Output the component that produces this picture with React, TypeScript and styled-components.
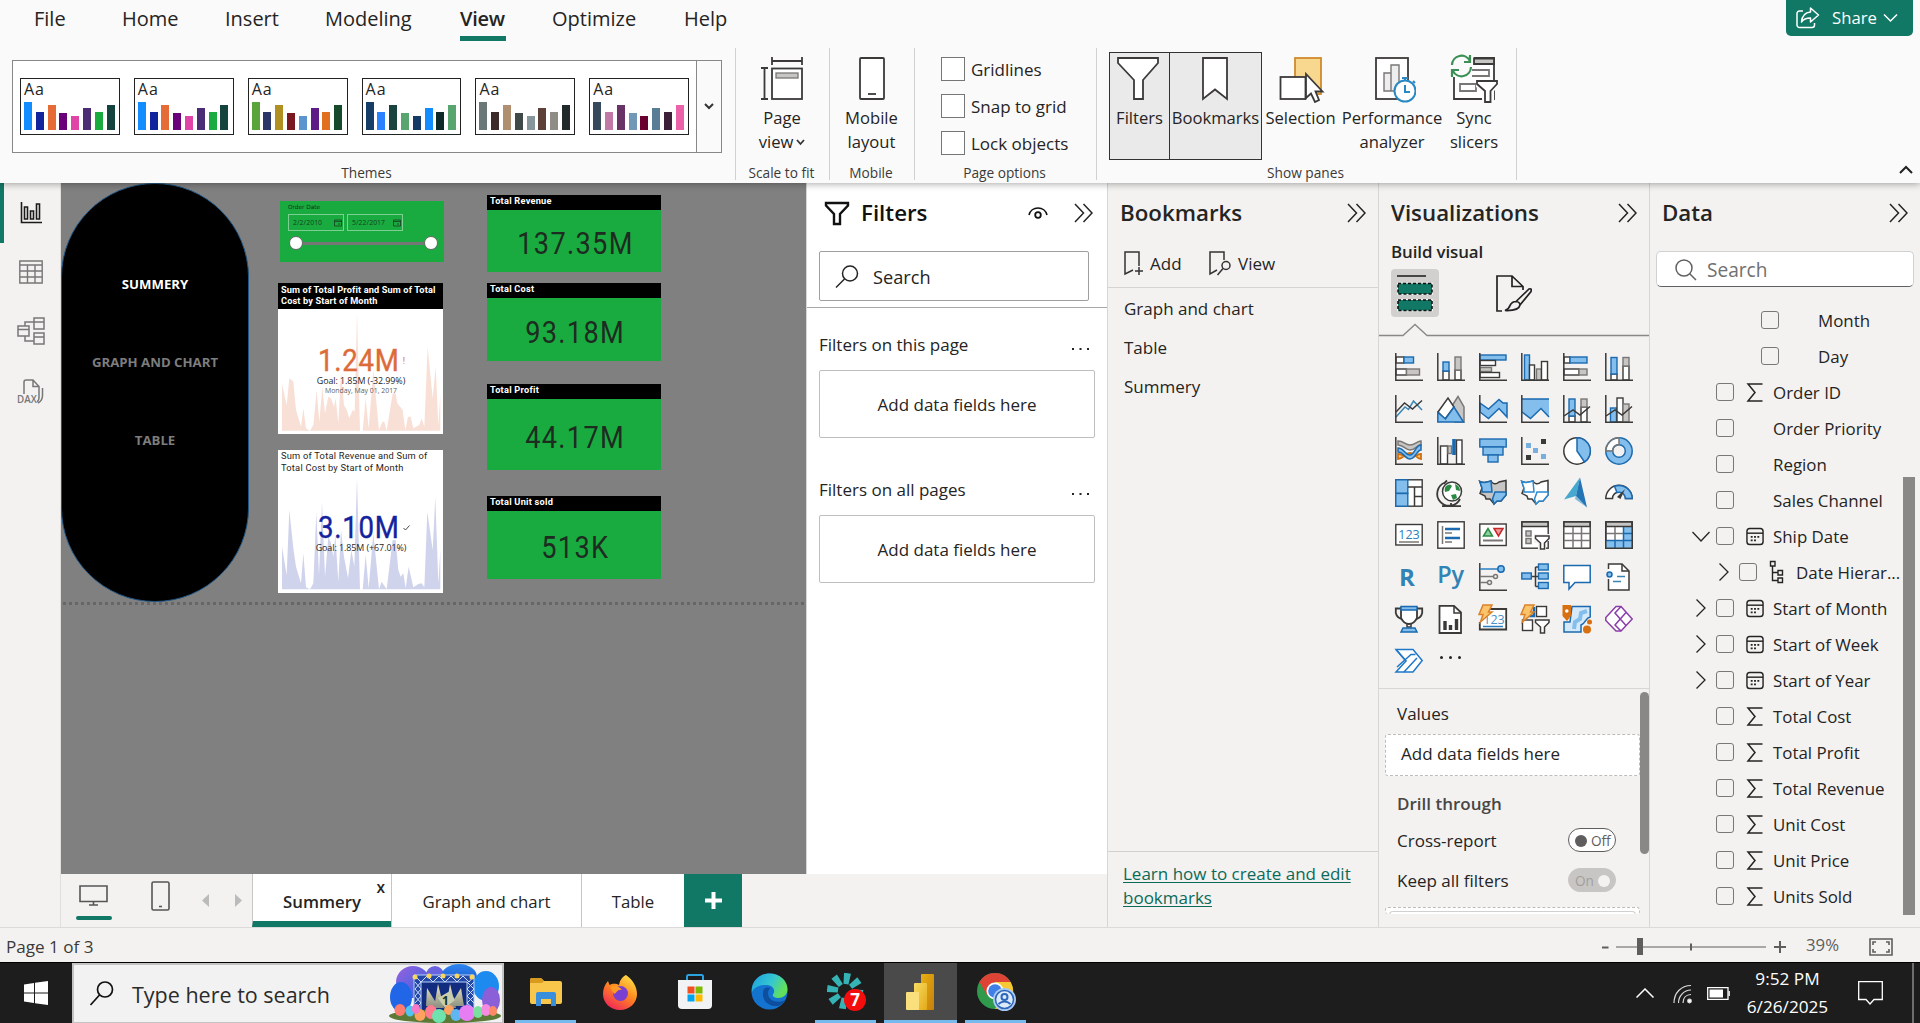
import React from "react";
import styled, { createGlobalStyle } from "styled-components";

const Global = createGlobalStyle`
  * { box-sizing: border-box; }
  html, body { margin: 0; padding: 0; overflow: hidden; }
  body { font-family: "Open Sans", "Noto Sans", sans-serif; color: #252423; }
  svg { display: block; flex: none; }
`;

const GREEN = "#117865";
const INK = "#3b3a39";
const BLUE = "#83beec";
const BLUE_D = "#1b6ab0";
const GRAY = "#c8c6c4";
const GRAY_D = "#797775";

const Window = styled.div`
  width: 1920px;
  height: 1023px;
  display: flex;
  flex-direction: column;
  background: #f3f2f1;
  overflow: hidden;
`;

/* ---------- ribbon ---------- */
const Ribbon = styled.header`
  height: 183px;
  flex: none;
  background: #fafafa;
  box-shadow: 0 1px 7px rgba(0, 0, 0, 0.35);
  position: relative;
  z-index: 2;
  display: flex;
  flex-direction: column;
`;
const MenuRow = styled.nav`
  height: 48px;
  display: flex;
  align-items: flex-start;
  padding-left: 34px;
`;
const MenuItem = styled.div<{ $w: number; $active?: boolean }>`
  width: ${(p) => p.$w}px;
  font-size: 20px;
  line-height: 37px;
  height: 37px;
  white-space: nowrap;
  font-weight: ${(p) => (p.$active ? 600 : 400)};
  letter-spacing: ${(p) => (p.$active ? "-0.3px" : "0")};
`;
const MenuMark = styled.div`
  width: 46px;
  height: 5px;
  margin-top: -1px;
  background: ${GREEN};
`;
const ShareButton = styled.button`
  margin-left: auto;
  margin-right: 7px;
  width: 127px;
  height: 36px;
  border: 0;
  border-radius: 0 0 5px 5px;
  background: ${GREEN};
  color: #fff;
  font: 400 16.7px/36px "Open Sans", sans-serif;
  display: flex;
  align-items: center;
  gap: 12px;
  padding: 0 0 0 9px;
`;
const Groups = styled.div`
  flex: 1;
  display: flex;
`;
const Group = styled.section<{ $w: number }>`
  width: ${(p) => p.$w}px;
  height: 132px;
  border-right: 1px solid #d2d0ce;
  display: flex;
  flex-direction: column;
`;
const GroupBody = styled.div<{ $pad?: string }>`
  height: 112px;
  flex: none;
  padding: ${(p) => p.$pad || "0"};
  display: flex;
  justify-content: flex-start;
`;
const GroupLabel = styled.div`
  font-size: 13.7px;
  line-height: 20px;
  height: 20px;
  flex: none;
  text-align: center;
  color: #3b3a39;
  padding-right: 2px;
  margin-top: 3px;
`;
const Gallery = styled.div`
  width: 710px;
  height: 93px;
  border: 1px solid #8a8886;
  background: #fff;
  display: flex;
  align-items: center;
  padding-left: 7px;
  gap: 14px;
`;
const GalleryMore = styled.div`
  width: 25px;
  height: 91px;
  margin-left: -7px;
  border-left: 1px solid #8a8886;
  background: #fafafa;
  display: grid;
  place-items: center;
`;
const Theme = styled.div`
  width: 100px;
  height: 57px;
  border: 1.5px solid #222;
  background: #fff;
  padding: 1px 4px 4px 3px;
  display: flex;
  flex-direction: column;
  justify-content: space-between;
`;
const ThemeName = styled.div`
  font-size: 16px;
  line-height: 18px;
  letter-spacing: 1px;
`;
const Bars = styled.div`
  display: flex;
  align-items: flex-end;
  gap: 3.8px;
  height: 29px;
`;
const Bar = styled.i<{ $c: string; $h: number }>`
  width: 8px;
  height: ${(p) => p.$h}px;
  background: ${(p) => p.$c};
`;
const BigButton = styled.div<{ $w: number; $on?: boolean; $ml?: number }>`
  width: ${(p) => p.$w}px;
  height: 108px;
  margin-left: ${(p) => p.$ml || 0}px;
  border: 1px solid ${(p) => (p.$on ? "#333" : "transparent")};
  background: ${(p) => (p.$on ? "#eaeaea" : "transparent")};
  display: flex;
  flex-direction: column;
  align-items: center;
  font-size: 16.6px;
  line-height: 24px;
  text-align: center;
  white-space: nowrap;
`;
const BigIcon = styled.div<{ $pl?: number; $pr?: number }>`
  height: 53px;
  padding-left: ${(p) => p.$pl || 0}px;
  padding-right: ${(p) => p.$pr || 0}px;
  display: flex;
  align-items: flex-start;
`;
const Line = styled.div`
  display: flex;
  align-items: center;
  justify-content: center;
  gap: 3px;
`;
const Checks = styled.div`
  display: flex;
  flex-direction: column;
  gap: 13px;
`;
const Check = styled.label`
  height: 24px;
  display: flex;
  align-items: center;
  gap: 6px;
  font-size: 17px;
`;
const Box = styled.span`
  width: 24px;
  height: 24px;
  border: 1px solid #767676;
  background: #fff;
`;
const Collapse = styled.div`
  margin-left: auto;
  padding: 117px 7px 0 0;
`;

/* ---------- main ---------- */
const Main = styled.main`
  height: 745px;
  flex: none;
  display: flex;
  border-bottom: 1px solid #dcdad8;
`;
const Rail = styled.aside`
  width: 61px;
  border-right: 1px solid #e1dfdd;
  display: flex;
  flex-direction: column;
`;
const RailItem = styled.div<{ $on?: boolean; $h: number }>`
  height: ${(p) => p.$h}px;
  border-left: 4px solid ${(p) => (p.$on ? GREEN : "transparent")};
  padding-right: 3px;
  display: grid;
  place-items: center;
`;
const Work = styled.div`
  width: 1046px;
  display: flex;
  flex-direction: column;
`;
const WorkTop = styled.div`
  height: 691px;
  display: flex;
`;
const Canvas = styled.div`
  width: 745px;
  background: #808080;
  position: relative;
`;
const Visual = styled.div<{ $x: number; $y: number; $w: number; $h: number; $bg?: string }>`
  position: absolute;
  left: ${(p) => p.$x - 61}px;
  top: ${(p) => p.$y - 183}px;
  width: ${(p) => p.$w}px;
  height: ${(p) => p.$h}px;
  background: ${(p) => p.$bg || "transparent"};
`;
const Pill = styled(Visual)`
  border-radius: 94px;
  border: 1px solid #1f5687;
  background: #000;
  display: flex;
  flex-direction: column;
  align-items: center;
  padding-top: 90px;
`;
const PillItem = styled.div<{ $on?: boolean }>`
  height: 78px;
  line-height: 20px;
  font-size: 13.2px;
  font-weight: 700;
  color: ${(p) => (p.$on ? "#fff" : "#7d7d7d")};
`;
const PageEdge = styled(Visual)`
  background: repeating-linear-gradient(90deg, #666 0 3px, #808080 3px 6px);
`;
const Slicer = styled(Visual)`
  background: #1aab40;
  padding: 2px 8px;
`;
const SlicerTitle = styled.div`
  font: 400 5.8px/9px "DejaVu Sans", sans-serif;
  color: #17301c;
`;
const DateRow = styled.div`
  display: flex;
  gap: 3px;
  margin-top: 2px;
`;
const DateBox = styled.div`
  width: 56px;
  height: 17px;
  border: 1px solid #7ccf90;
  display: flex;
  align-items: center;
  justify-content: space-between;
  padding: 0 1px 0 4px;
  font-size: 6.8px;
  letter-spacing: 0.1px;
  line-height: 14px;
  color: #14401f;
`;
const Track = styled.div`
  margin: 5px -2px 0 1px;
  height: 14px;
  display: flex;
  align-items: center;
`;
const Knob = styled.i`
  width: 14px;
  height: 14px;
  border-radius: 50%;
  background: #fff;
  border: 1px solid #666;
`;
const Rule = styled.i`
  flex: 1;
  height: 3px;
  background: #767676;
`;
const CardHead = styled.div<{ $h: number }>`
  height: ${(p) => p.$h}px;
  background: #000;
  color: #fff;
  font: 700 9.2px/12px Roboto, sans-serif;
  letter-spacing: 0.25px;
  padding-left: 3px;
`;
const CardValue = styled.div<{ $h: number; $pad?: number }>`
  height: ${(p) => p.$h}px;
  padding: ${(p) => p.$pad || 0}px 0 0 2px;
  display: flex;
  align-items: center;
  justify-content: center;
  font: 400 30.5px/30px Roboto, sans-serif;
  letter-spacing: 1.5px;
  color: #1d2b20;
`;
/* Roboto drawn at the narrower proportions of a DIN numeral */
const Narrow = styled.span<{ $s: number }>`
  display: inline-block;
  transform: scaleX(${(p) => p.$s});
`;
const KpiHead = styled.div<{ $dark?: boolean }>`
  height: 26px;
  padding: ${(p) => (p.$dark ? "1px" : "0")} 0 0 3px;
  background: ${(p) => (p.$dark ? "#000" : "#fff")};
  color: ${(p) => (p.$dark ? "#fff" : "#252423")};
  font: ${(p) => (p.$dark ? "700 9.2px/11px" : "400 9.3px/12px")} Roboto, sans-serif;
  letter-spacing: ${(p) => (p.$dark ? "0.14px" : "0.22px")};
  white-space: nowrap;
`;
const KpiBody = styled.div<{ $h: number }>`
  height: ${(p) => p.$h}px;
  display: grid;
  > * { grid-area: 1 / 1; }
`;
const KpiText = styled.div<{ $pad: number }>`
  padding-top: ${(p) => p.$pad}px;
  display: flex;
  flex-direction: column;
  align-items: center;
  z-index: 1;
`;
const KpiValue = styled.div<{ $c: string }>`
  display: flex;
  align-items: center;
  font: 400 31px/28px Roboto, sans-serif;
  letter-spacing: 0.8px;
  color: ${(p) => p.$c};
  -webkit-text-stroke: 0.4px ${(p) => p.$c};
  padding-right: 6px;
`;
const KpiMark = styled.span`
  width: 0;
  margin-left: -3px;
  font-size: 9px;
  padding-left: 1px;
  -webkit-text-stroke: 0;
`;
const KpiGoal = styled.div`
  font-size: 8.9px;
  line-height: 11px;
  letter-spacing: -0.05px;
`;
const KpiDate = styled.div`
  font-size: 6.9px;
  line-height: 9px;
  color: #605e5c;
`;

/* ---------- panes ---------- */
const Pane = styled.section<{ $w: number; $bg?: string }>`
  width: ${(p) => p.$w}px;
  background: ${(p) => p.$bg || "#f3f2f1"};
  border-left: 1px solid #d8d6d4;
  display: flex;
  flex-direction: column;
  font-size: 17px;
`;
const PaneHead = styled.div<{ $l: number; $r: number }>`
  height: 58px;
  flex: none;
  padding: 1px ${(p) => p.$r}px 0 ${(p) => p.$l}px;
  display: flex;
  align-items: center;
`;
const PaneTitle = styled.h2`
  margin: 0 auto 0 0;
  font-size: 22.3px;
  line-height: 30px;
  font-weight: 600;
`;
const FilterTitle = styled(PaneTitle)`
  padding-left: 11px;
  color: #111;
`;
const HeadGap = styled.span`
  width: 26px;
`;
const SearchBox = styled.div`
  margin: 10px 0 0 12px;
  width: 270px;
  height: 50px;
  flex: none;
  border: 1px solid #a19f9d;
  border-radius: 2px;
  display: flex;
  align-items: center;
  gap: 14px;
  padding-left: 15px;
  font-size: 18.2px;
  padding-top: 1px;
`;
const FilterBody = styled.div`
  margin-top: 6px;
  border-top: 1px solid #a8a8a8;
  padding: 23px 12px 0 12px;
`;
const FilterHead = styled.div`
  height: 39px;
  line-height: 27px;
  display: flex;
  justify-content: space-between;
  padding-right: 6px;
`;
const DropZone = styled.div`
  width: 276px;
  height: 68px;
  border: 1px solid #c1bfbd;
  border-radius: 2px;
  display: grid;
  place-items: center;
  margin-bottom: 38px;
`;
const BmTools = styled.div`
  height: 47px;
  border-bottom: 1px solid #d6d4d2;
  display: flex;
  align-items: center;
  padding: 0 0 1px 16px;
`;
const BmTool = styled.div<{ $w: number }>`
  width: ${(p) => p.$w}px;
  display: flex;
  align-items: center;
  gap: 7px;
  height: 45px;
  line-height: 45px;
`;
const BmList = styled.div`
  padding-top: 1px;
`;
const BmItem = styled.div`
  height: 39px;
  line-height: 39px;
  padding-left: 16px;
`;
const BmFoot = styled.div`
  margin-top: auto;
  height: 76px;
  border-top: 1px solid #d2d0ce;
  padding: 10px 0 0 15px;
  line-height: 24px;
  color: #0b6a58;
  text-decoration: underline;
  text-underline-offset: 2px;
  text-decoration-thickness: 1px;
`;
const SubTitle = styled.div`
  padding-left: 12px;
  font-size: 16.9px;
  font-weight: 600;
  line-height: 22px;
  height: 28px;
  letter-spacing: -0.1px;
`;
const Modes = styled.div`
  display: flex;
  padding-left: 12px;
  gap: 51px;
  height: 54px;
`;
const Mode = styled.div<{ $on?: boolean }>`
  width: 48px;
  height: 48px;
  border-radius: 4px;
  background: ${(p) => (p.$on ? "#d2d0ce" : "transparent")};
  display: grid;
  place-items: center;
`;
const IconGrid = styled.div`
  display: grid;
  grid-template-columns: repeat(6, 28px);
  grid-auto-rows: 28px;
  gap: 14px;
  padding: 16px 0 0 16px;
  height: 352px;
  flex: none;
  border-bottom: 1px solid #d8d6d4;
`;
const VizScroll = styled.div`
  display: flex;
  height: 225px;
`;
const Wells = styled.div`
  width: 261px;
  height: 225px;
  overflow: hidden;
  padding-left: 6px;
  display: flex;
  flex-direction: column;
`;
const WellLabel = styled.div<{ $h: number; $bold?: boolean; $pt?: number }>`
  height: ${(p) => p.$h}px;
  flex: none;
  display: flex;
  align-items: center;
  justify-content: space-between;
  padding: ${(p) => p.$pt || 0}px 24px 0 12px;
  font-weight: ${(p) => (p.$bold ? 600 : 400)};
  color: ${(p) => (p.$bold ? "#484644" : "#252423")};
`;
const Well = styled.div`
  height: 42px;
  flex: none;
  border: 1px dashed #bebbb8;
  padding-left: 15px;
  border-radius: 3px;
  background: #fff;
  line-height: 37px;
`;
const CutWell = styled(Well)`
  height: 7px;
  margin-top: 3px;
  padding: 3px;
  border-bottom: 0;
`;
const WellInner = styled.div`
  height: 4px;
  border: 1px solid #d2d0ce;
  border-bottom: 0;
  border-radius: 4px 4px 0 0;
`;
const Toggle = styled.div<{ $off?: boolean }>`
  width: 48px;
  height: 24px;
  border-radius: 12px;
  border: 1px solid ${(p) => (p.$off ? "#605e5c" : "#c8c6c4")};
  background: ${(p) => (p.$off ? "#fff" : "#c8c6c4")};
  color: ${(p) => (p.$off ? "#605e5c" : "#a19f9d")};
  font-size: 13.6px;
  line-height: 20px;
  padding-top: 1px;
  display: flex;
  align-items: center;
  gap: 4px;
  padding-left: 6px;
`;
const Dot = styled.i<{ $c: string }>`
  width: 12px;
  height: 12px;
  border-radius: 50%;
  background: ${(p) => p.$c};
`;
const VizThumb = styled.div`
  width: 9px;
  height: 162px;
  margin-top: 3px;
  border-radius: 5px;
  background: #8a8886;
`;
const DataSearch = styled.div`
  margin: 10px 0 0 6px;
  width: 258px;
  height: 36px;
  flex: none;
  border: 1px solid #d1d1d1;
  border-bottom-color: #616161;
  border-radius: 5px;
  background: #fff;
  color: #707070;
  font-size: 19.1px;
  display: flex;
  align-items: center;
  gap: 10px;
  padding: 1px 0 0 18px;
`;
const DataBody = styled.div`
  display: flex;
  margin-top: 15px;
`;
const Fields = styled.div`
  width: 253px;
`;
const Field = styled.div<{ $indent: number }>`
  height: 36px;
  padding-left: ${(p) => p.$indent}px;
  display: flex;
  align-items: center;
  white-space: nowrap;
`;
const Slot = styled.span<{ $w: number; $pl?: number }>`
  width: ${(p) => p.$w}px;
  padding-left: ${(p) => p.$pl || 0}px;
  flex: none;
  display: flex;
`;
const FieldBox = styled.span`
  width: 18px;
  height: 18px;
  margin-right: 12px;
  flex: none;
  border: 1px solid #7a7876;
  border-radius: 3px;
`;
const FieldName = styled.span`
  font-size: 16.9px;
`;
const DataThumb = styled.div`
  width: 12px;
  height: 438px;
  margin-top: 175px;
  background: #8a8886;
`;

/* ---------- page tabs + status ---------- */
const Tabs = styled.div`
  height: 53px;
  display: flex;
  font-size: 16.8px;
`;
const Views = styled.div`
  width: 191px;
  display: flex;
  padding-left: 15px;
`;
const View = styled.div<{ $w: number; $pt: number }>`
  width: ${(p) => p.$w}px;
  padding-top: ${(p) => p.$pt}px;
`;
const Underline = styled.i`
  display: block;
  width: 36px;
  height: 4px;
  margin-top: 10px;
  border-radius: 2px;
  background: ${GREEN};
`;
const Tab = styled.div<{ $w: number; $on?: boolean }>`
  width: ${(p) => p.$w}px;
  background: #fff;
  border-left: 1px solid #c8c6c4;
  border-bottom: ${(p) => (p.$on ? `6px solid ${GREEN}` : "0")};
  font-weight: ${(p) => (p.$on ? 600 : 400)};
  height: 53px;
  line-height: 55px;
  text-align: center;
  position: relative;
`;
const TabClose = styled.span`
  position: absolute;
  right: 6px;
  top: 0;
  font-size: 15.5px;
  line-height: 26px;
`;
const AddTab = styled.div`
  width: 58px;
  background: ${GREEN};
  display: grid;
  place-items: center;
`;
const Status = styled.footer`
  height: 34px;
  flex: none;
  display: flex;
  align-items: center;
  padding: 3px 27px 0 6px;
  font-size: 17.1px;
  color: #3b3a39;
`;
const Zoom = styled.div`
  margin-left: auto;
  display: flex;
  align-items: center;
  color: #605e5c;
`;
const Percent = styled.span`
  width: 63px;
  margin-left: 20px;
  margin-top: -4px;
  font-size: 16.8px;
`;

/* ---------- taskbar ---------- */
const Taskbar = styled.div`
  height: 61px;
  flex: none;
  background: #1d1d1d;
  border-top: 1px solid #000;
  display: flex;
`;
const Start = styled.div`
  width: 72px;
  display: grid;
  place-items: center;
`;
const TaskSearch = styled.div`
  width: 432px;
  height: 60px;
  background: #f2f2f2;
  border: 2px solid #c3c3c3;
  border-bottom-width: 1px;
  display: flex;
  align-items: center;
  padding-left: 15px;
  font-size: 21.5px;
  color: #2b2b2b;
`;
const TaskText = styled.span`
  margin-left: 18px;
  width: 256px;
  padding-top: 1px;
`;
const TaskItem = styled.div<{ $w: number; $ml?: number; $run?: boolean; $on?: boolean; $pl?: number }>`
  width: ${(p) => p.$w}px;
  margin-left: ${(p) => p.$ml || 0}px;
  padding-left: ${(p) => p.$pl || 0}px;
  height: 60px;
  background: ${(p) => (p.$on ? "#4a4a4a" : "transparent")};
  border-bottom: 3px solid ${(p) => (p.$run ? "#76b9ed" : "transparent")};
  display: grid;
  place-items: center;
`;
const Tray = styled.div`
  margin-left: auto;
  display: flex;
  align-items: center;
  color: #fff;
`;
const Wifi = styled.span`
  margin: 2px 15px 0 19px;
`;
const Clock = styled.div`
  width: 128px;
  padding-right: 13px;
  text-align: center;
  font-size: 17.2px;
  line-height: 28px;
`;
const Peek = styled.i`
  width: 2px;
  height: 60px;
  margin: 0 6px 0 29px;
  background: #6e6e6e;
`;

/* ---------- icons ---------- */
type RP = { x: number; y: number; w: number; h: number; k?: "b" | "g" | "w" | "k" };
const fills = { b: [BLUE, BLUE_D], g: [GRAY, GRAY_D], w: ["#fff", INK], k: [INK, INK] };
const R = ({ x, y, w, h, k = "w" }: RP) => (
  <rect x={x} y={y} width={w} height={h} fill={fills[k][0]} stroke={fills[k][1]} strokeWidth={1.4} />
);
const V = ({ children }: { children: React.ReactNode }) => (
  <svg width="28" height="28" viewBox="0 0 28 28" fill="none" stroke={INK} strokeWidth={1.5} overflow="visible">
    {children}
  </svg>
);
const Axis = () => <path d="M.8 0V27.2H28" />;

const bolt = "M4 0H13L9.500 7H13L1.500 17L4 9.500H0Z";
const ohio = "M.8 2.500C4 4 8 3.500 12 2 13 5 17 6 20 3L27 1.500V16L22 22H18L15 25 11 20H7L6 17 1 14.500 3 9Z";
const ohioNW = "M.8 2.500C4 4 8 3.500 12 2L13 13H3L3 9Z";
const ohioSE = "M16 13H27V16L22 22H18L15 25 13.500 20Z";

const vizIcons: React.ReactNode[] = [
  <V><R x={1} y={4} w={8} h={6} /><R x={9} y={4} w={9.500} h={6} k="b" /><R x={1} y={16} w={10.500} h={6} /><R x={11.500} y={16} w={13} h={6} k="g" /><Axis /></V>,
  <V><R x={6} y={18} w={6} h={9} /><R x={6} y={9} w={6} h={9} k="b" /><R x={18} y={17} w={6} h={10} /><R x={18} y={4} w={6} h={13} k="g" /><Axis /></V>,
  <V><R x={1} y={2} w={26} h={5} k="b" /><R x={1} y={7.500} w={15.500} h={5} /><R x={1} y={14.500} w={11.500} h={4} k="g" /><R x={1} y={19.500} w={19.500} h={5} /><Axis /></V>,
  <V><R x={3.500} y={2} w={5} h={25} k="b" /><R x={8.500} y={12} w={5} h={15} /><R x={15.500} y={16} w={5} h={11} k="g" /><R x={20.500} y={8.500} w={6} h={18.500} /><Axis /></V>,
  <V><R x={1} y={4} w={6} h={6} /><R x={7} y={4} w={17} h={6} k="b" /><R x={1} y={16} w={15} h={6} /><R x={16} y={16} w={8} h={6} k="g" /><Axis /></V>,
  <V><R x={6} y={21} w={6} h={6} /><R x={6} y={4.500} w={6} h={16.500} k="b" /><R x={18} y={13} w={6} h={14} /><R x={18} y={4.500} w={6} h={8.500} k="g" /><Axis /></V>,

  <V><path d="M1 22L10 12 13.500 14.500 18.500 6 27 15" stroke="#3a85b5" /><path d="M1 17L9.500 8 17.500 14 27 5.500" /><Axis /></V>,
  <V><path d="M13 14L21 1.500 27 12V27H18Z" fill={GRAY} stroke={GRAY_D} /><path d="M1 17L11 3 17 12 8 24Z" fill="#fff" /><path d="M.8 27V17.500L8.500 24 17 12 26.500 27Z" fill={BLUE} stroke={BLUE_D} /></V>,
  <V><path d="M1 8L9.500 14 20 4.500 24 8H28V22L20 13.500 9.500 23.500 1 17Z" fill={BLUE} stroke={BLUE_D} /><Axis /></V>,
  <V><path d="M1 4H28V22L20 13.500 9.500 23.500 1 17Z" fill={BLUE} stroke="none" /><path d="M1 4H28M1 17L9.500 23.500 20 13.500 28 22" stroke={BLUE_D} /><Axis /></V>,
  <V><R x={6} y={21} w={6} h={6} /><R x={6} y={4} w={6} h={17} k="b" /><R x={18} y={12} w={6} h={15} /><R x={18} y={4} w={6} h={8} k="g" /><path d="M1 21L10 15 17 20 27 11.500" /><Axis /></V>,
  <V><R x={5.500} y={13} w={6} h={14} k="b" /><R x={12} y={3} w={6} h={24} /><R x={18} y={9} w={6} h={18} k="g" /><path d="M1 21L10 15 17 20 27 11.500" /><Axis /></V>,

  <V><path d="M3 4C9 4 10 8 15 8S22 4 26 4V8C22 8 20 13 15 13S9 8 3 8Z" fill={GRAY} stroke={GRAY_D} /><path d="M3 22C8 22 10 16 15 16S22 22 26 22V17C21 17 20 21 15 21S9 17 3 17Z" fill="#f8c77a" stroke="#d0700f" strokeWidth={1.8} /><path d="M3 11C9 11 10 18 15 18S20 8 26 8V13C22 13 20 22 15 22S9 15 3 15Z" fill={BLUE} stroke={BLUE_D} /><Axis /></V>,
  <V><R x={3.500} y={9} w={7} h={18} /><R x={11} y={9} w={3.500} h={7.500} k="g" /><path d="M17 2V18" stroke={BLUE_D} strokeWidth={3.600} /><R x={19.500} y={3} w={5.500} h={24} /><Axis /></V>,
  <V><R x={.8} y={2} w={26.400} h={8} k="b" /><R x={4} y={10} w={20} h={8} k="b" /><R x={9} y={18} w={10} h={7} k="b" /></V>,
  <V><Axis /><g stroke="none"><path d="M20 2h5v5h-5zM5 18h5v5H5z" fill={INK} /><path d="M5 6h5v5H5zM12 11h5v5h-5zM20 17h5v5h-5z" fill="#76aede" /></g></V>,
  <V><circle cx="14" cy="14" r="13.200" fill="#fff" /><path d="M14 .8A13.200 13.200 0 0 1 21.500 25L14 14Z" fill={BLUE} stroke={BLUE_D} /></V>,
  <V><circle cx="14" cy="14" r="9.800" stroke={BLUE} strokeWidth={6.500} /><path d="M14 4.200A9.800 9.800 0 0 0 4.200 13" stroke="#fff" strokeWidth={6.500} /><g stroke={BLUE_D}><circle cx="14" cy="14" r="13.200" /><circle cx="14" cy="14" r="6.300" /></g><path d="M14 .8A13.200 13.200 0 0 0 .8 14H7.500A6.500 6.500 0 0 1 14 7.500Z" stroke={GRAY_D} /></V>,

  <V><R x={.8} y={.8} w={26.400} h={26.400} /><R x={.8} y={.8} w={12} h={13.500} k="b" /><R x={.8} y={14.500} w={12} h={12.700} k="b" /><path d="M13 8H27M19.500 8V27M19.500 17.500H27" /></V>,
  <V><path d="M8 3.500A12 12 0 1 0 23 20M10 1.500L7 4.500M14 24V27M5 27.200H24" strokeWidth={1.8} /><circle cx="15" cy="12.500" r="9.500" fill="#fff" /><path d="M9 7Q13 4 15 7L12 12 8 13Q7 9 9 7ZM18 5Q23 7 23 12L19 11ZM14 16L19 15 20 19 16 21Z" fill="#2a8a43" stroke="none" /></V>,
  <V><path d={ohio} fill={GRAY} /><path d={ohioNW} fill={BLUE} stroke={BLUE_D} /><path d={ohioSE} fill={BLUE} stroke={BLUE_D} /></V>,
  <V><path d={ohio} fill="#fff" /><path d={ohioNW} fill="#fff" stroke="#2a8ad4" /><path d={ohioSE} fill="#fff" stroke="#2a8ad4" /></V>,
  <V><g stroke="none"><path d="M17-1.500L1 20.500 13 17Z" fill="#47a8cf" /><path d="M17-1.500L24 28.500 13 17Z" fill="#2374b5" /><path d="M17-1.500L13 17 24 28.500 12 20Z" fill="#3796cb" opacity=".6" /></g></V>,
  <V><path d="M.8 19.500A13.200 13.200 0 0 1 27.200 19.500H20.500A6.500 6.500 0 0 0 7.500 19.500Z" fill="#fff" /><path d="M9.500 7.300A13.200 13.200 0 0 1 27.200 19.500H20.500A6.500 6.500 0 0 0 12 13.500Z" fill={BLUE} stroke={BLUE_D} /><path d="M20 10L12 18 15.500 20Z" fill={INK} stroke="none" /></V>,

  <V><R x={.8} y={3.500} w={26.400} h={20.500} /><text x="14" y="17.500" fontSize="12.500" fontFamily="Open Sans" textAnchor="middle" fill="#2a7fc0" stroke="none">123</text><path d="M4 21H24" stroke={GRAY_D} /></V>,
  <V><R x={.8} y={.8} w={26.400} h={26.400} /><path d="M5.500 5V23" stroke={GRAY_D} /><path d="M8 8H23M8 17H23" stroke={BLUE_D} strokeWidth={2.600} /><path d="M8 12H15M8 21H15" stroke={GRAY_D} /></V>,
  <V><R x={.8} y={3} w={26.400} h={21.500} /><path d="M4.500 15L9 7.500 13.500 15Z" fill="#8fd19e" stroke="#2e8b45" /><path d="M15 7.500H24L19.500 15Z" fill="#ef9a9a" stroke="#c62828" /><path d="M4 19.500H24" stroke={GRAY_D} strokeWidth={2} /></V>,
  <V><R x={.8} y={.8} w={26.400} h={26.400} /><path d="M1 1H27V5.500H1Z" fill={GRAY} /><path d="M5 10h5v5H5zM5 17.500h5v5H5z" fill={GRAY} stroke={GRAY_D} /><path d="M13 13H29V20H25V29H17V22H13Z" fill="#f3f2f1" stroke="none" /><path d="M14.500 15H28V17.500L23.500 22V28H19.500V22L14.500 17.500Z" fill="#fff" /></V>,
  <V><R x={.8} y={.8} w={26.400} h={26.400} /><path d="M1 1H27V5.500H1Z" fill={GRAY} /><path d="M10 6V27M18.500 6V27M1 12.500H27M1 19.500H27" stroke={GRAY_D} /></V>,
  <V><R x={.8} y={.8} w={26.400} h={26.400} /><path d="M18.500 6H27V27H1V19.500H18.500Z" fill={BLUE} stroke="none" /><path d="M1 1H27V5.500H1Z" fill={GRAY} /><path d="M10 6V19M1 12.500H18" stroke={GRAY_D} /><path d="M18.500 6V27M10 19.500V27M18.500 12.500H27M1 19.500H27" stroke={BLUE_D} /><path d="M.8.800V27.200H27.200V.8" stroke={INK} /></V>,

  <V><text x="12" y="23" fontSize="24" fontWeight="700" fontFamily="Open Sans" textAnchor="middle" fill="#3183b5" stroke="none">R</text></V>,
  <V><text x="13.700" y="20" fontSize="23.500" fontWeight="600" fontFamily="Open Sans" textAnchor="middle" fill="#3183b5" stroke="none">Py</text></V>,
  <V><Axis /><path d="M1 6H19" stroke="#2a7fc0" /><circle cx="22" cy="6" r="3.200" fill={BLUE} stroke={BLUE_D} /><g stroke={GRAY_D}><path d="M1 13.500H14M1 19.500H8" /><circle cx="16.500" cy="13.500" r="2" /><circle cx="10.500" cy="19.500" r="2" /></g></V>,
  <V><path d="M10 13.500H18M14.500 4V23.500M14.500 4H18M14.500 23.500H18" /><R x={.8} y={10} w={9.500} h={6} k="b" /><R x={17.500} y={1} w={9.700} h={6} k="b" /><R x={17.500} y={10} w={9.700} h={6} k="b" /><R x={17.500} y={19.500} w={9.700} h={6} k="b" /></V>,
  <V><path d="M.8 2.500H27.200V19.500H12L6 26V19.500H.8Z" fill="#fff" stroke={BLUE_D} /></V>,
  <V><path d="M3.500 6V1H17L24 8V27H3.500V16" fill="#fff" /><path d="M17 1V8H24" /><circle cx="4.500" cy="11.500" r="2.500" fill={BLUE} stroke={BLUE_D} /><path d="M12 13.500H20M8 18.500H16" stroke="#3a85b5" /></V>,

  <V><path d="M6 3.500H.8V8Q2 13 7 14M22 3.500H27.200V8Q26 13 21 14" strokeWidth={1.8} /><path d="M6 3H22V13Q19 19 14 19T6 13Z" fill="#fff" strokeWidth={1.800} /><path d="M12 19V22H16V19" /><path d="M6 1.500H22V5H6Z" fill={BLUE} stroke={BLUE_D} /><path d="M8 23H20L22 27H6Z" fill={BLUE} stroke={BLUE_D} /></V>,
  <V><path d="M2.500.800H17L24 7.500V28H2.500Z" fill="#fff" strokeWidth={1.800} /><path d="M17 1V8H24" /><path d="M8 16V25M13.500 20V25M19.500 14V25" strokeWidth={3.400} /></V>,
  <V><path d="M11 4H27.200V24.500H.8V17" fill="#fff" strokeWidth={1.800} /><text x="15" y="18.500" fontSize="12.500" fontFamily="Open Sans" textAnchor="middle" fill="#4a92c8" stroke="none">123</text><path d="M4 21.500H24" stroke="#2a7fc0" /><path d={bolt} fill="#fbc46b" stroke="#d9822b" /></V>,
  <V><R x={15.500} y={1.500} w={10} h={10} /><R x={1.500} y={15} w={10} h={10.500} /><path d="M8 11H13V2" stroke={BLUE_D} strokeWidth={2.500} /><path d="M14 14H29V20H25V29H17V22H13Z" fill="#f3f2f1" stroke="none" /><path d="M14.500 15H28V17.500L23.500 22V28H19.500V22L14.500 17.500Z" fill="#fff" /><path d={bolt} fill="#fbc46b" stroke="#d9822b" /></V>,
  <V><path d="M9 1.500H27.200V12C22 13 24 17 18 20V27H1V17H7Z" fill="#d6e9f8" stroke={BLUE_D} /><path d="M11 24L12 17 17 14 18 8 24 6" stroke={BLUE} strokeWidth={4} /><g fill="#d86f10" stroke="none"><path d="M-.500 0H8V11L4 16-.500 11Z" /><circle cx="24" cy="24.500" r="4" /><circle cx="26.500" cy="17" r="2.500" /></g><circle cx="3.800" cy="6" r="1.800" fill="#fff" stroke="none" /></V>,
  <V><g stroke="#8a3ea8"><path d="M11 1.500L.8 12.500V15.500L11 26H16L27.200 14 16 1.500Z" fill="#fff" /><path d="M16 1.500L10 8 21 20.500M21 7.500L10 20 16 26" /></g></V>,

  <V><path d="M1 2.500H18L27.200 13.500 18 25H1L11 14Z" fill="#fff" stroke="#1f78c8" /><path d="M1 2.500L11 14M2 20L16 7.500H20.500M9 25L22 11" stroke="#1f78c8" /></V>,
  <V><g fill="#252423" stroke="none"><circle cx="4.500" cy="10.500" r="1.500" /><circle cx="13.500" cy="10.500" r="1.500" /><circle cx="22.500" cy="10.500" r="1.500" /></g></V>,
];

const DoubleChevron = () => (
  <svg width="19" height="20" viewBox="0 0 19 20" fill="none" stroke="#252423" strokeWidth="1.5">
    <path d="M1 1L9.500 10 1 19M9.500 1L18 10 9.500 19" />
  </svg>
);
const Funnel = () => (
  <svg width="26" height="26" viewBox="0 0 26 26" fill="none" stroke="#111" strokeWidth="2.400">
    <path d="M2 3H24V5.500L16 14V24H10V14L2 5.500Z" />
  </svg>
);
const Sigma = () => (
  <svg width="18" height="19" viewBox="0 0 18 19" fill="none" stroke="#252423" strokeWidth="1.5">
    <path d="M16.500 1H2L9 9.500 2 18H16.500" />
  </svg>
);
const Calendar = () => (
  <svg width="18" height="19" viewBox="0 0 19 19" fill="none" stroke="#252423" strokeWidth="1.5">
    <rect x="1" y="1" width="17" height="17" rx="3" />
    <path d="M1 6H18" />
    <path d="M5 10h2M8.500 10h2M12 10h2M5 13.500h2M8.500 13.500h2" strokeWidth="1.8" />
  </svg>
);
const Tree = () => (
  <svg width="16" height="24" viewBox="0 0 16 24" fill="none" stroke="#252423" strokeWidth="1.4">
    <path d="M1.500 1.500h4.500v4.500H1.500zM9 10.500h4.500v4.500H9zM9 18h4.500v4.500H9zM3.500 6V20.500H9M3.500 12.500H9" />
  </svg>
);
const Chevron = ({ down }: { down?: boolean }) =>
  down ? (
    <svg width="18" height="11" viewBox="0 0 18 11" fill="none" stroke="#252423" strokeWidth="1.3"><path d="M.5 1L9 10 17.500 1" /></svg>
  ) : (
    <svg width="10" height="18" viewBox="0 0 10 18" fill="none" stroke="#252423" strokeWidth="1.3"><path d="M.5.5L9 9 .5 17.500" /></svg>
  );

/* ---------- data ---------- */
const menu: [string, number, boolean?][] = [
  ["File", 88], ["Home", 103], ["Insert", 100], ["Modeling", 135], ["View", 92, true], ["Optimize", 132], ["Help", 60],
];
const heights = [28, 18, 25, 17, 14, 22, 18, 25];
const themes = [
  ["#118dff", "#12239e", "#e66c37", "#6b007b", "#e044a7", "#4a2d75", "#1aab40", "#15443f"],
  ["#118dff", "#12239e", "#e66c37", "#6b007b", "#e044a7", "#4a2d75", "#1aab40", "#15443f"],
  ["#5ba33b", "#2b3668", "#b09020", "#7a1820", "#5b94ce", "#5e1d85", "#e07020", "#154a2b"],
  ["#163d68", "#2a82ff", "#1a4440", "#58a56f", "#143a66", "#118dff", "#0c2a28", "#58a56f"],
  ["#6a7878", "#3a2a2a", "#b08f70", "#3f4a48", "#87969a", "#5d4038", "#8f8e86", "#22292a"],
  ["#364a5c", "#c07aa5", "#6a3366", "#7298b8", "#6a0030", "#5a7d96", "#3c2038", "#ec62a8"],
];
const fields: { n: string; i?: "s" | "c" | "t"; c?: "d" | "r"; lvl?: number }[] = [
  { n: "Month", lvl: 2 }, { n: "Day", lvl: 2 }, { n: "Order ID", i: "s" }, { n: "Order Priority" }, { n: "Region" },
  { n: "Sales Channel" }, { n: "Ship Date", i: "c", c: "d" }, { n: "Date Hierar...", i: "t", c: "r", lvl: 1 },
  { n: "Start of Month", i: "c", c: "r" }, { n: "Start of Week", i: "c", c: "r" }, { n: "Start of Year", i: "c", c: "r" },
  { n: "Total Cost", i: "s" }, { n: "Total Profit", i: "s" }, { n: "Total Revenue", i: "s" }, { n: "Unit Cost", i: "s" },
  { n: "Unit Price", i: "s" }, { n: "Units Sold", i: "s" },
];
const cards = [
  { t: "Total Revenue", v: "137.35M", y: 195, h: 77, p: 5 },
  { t: "Total Cost", v: "93.18M", y: 283, h: 78, p: 6 },
  { t: "Total Profit", v: "44.17M", y: 384, h: 86, p: 7 },
  { t: "Total Unit sold", v: "513K", y: 496, h: 83, p: 5 },
];
const profitArea =
  "846,752 846,612 860,675 868,595 880,605 888,690 903,740 910,685 918,745 930,752 940,735 950,630 958,725 967,620 975,700 985,650 993,655 1002,680 1007,655 1015,730 1023,575 1032,675 1040,690 1048,715 1058,690 1064,695 1071,395 1080,752 1088,752 1097,655 1106,745 1120,570 1137,750 1147,725 1153,725 1160,752 1178,640 1187,640 1192,670 1208,690 1216,750 1224,710 1232,710 1240,745 1258,735 1265,715 1273,740 1283,500 1298,655 1307,560 1315,735 1321,645 1321,752";
const revenueArea =
  "846,1228 846,1100 860,1185 868,990 880,1105 888,1160 903,1210 910,1120 918,1222 930,1228 940,1210 949,995 957,1185 966,965 975,1190 985,1070 993,1090 1000,1130 1006,1065 1015,1205 1023,1050 1032,1130 1044,1195 1054,1110 1063,1160 1071,893 1080,1228 1088,1228 1097,1125 1106,1225 1120,1060 1137,1228 1145,1205 1160,1228 1178,1080 1187,1080 1195,1170 1202,1190 1210,1180 1217,1225 1226,1160 1240,1222 1255,1212 1265,1210 1273,1222 1282,995 1298,1110 1306,950 1315,1210 1321,1110 1321,1228";

const RibbonBar = () => (
  <Ribbon>
    <MenuRow>
      {menu.map(([t, w, on]) => (
        <MenuItem key={t} $w={w} $active={on}>
          {t}
          {on && <MenuMark />}
        </MenuItem>
      ))}
      <ShareButton>
        <svg width="25" height="24" viewBox="0 0 25 24" fill="none" stroke="#fff" strokeWidth="1.5">
          <path d="M8 5H4.500A2.500 2.500 0 0 0 2 7.500V19A2.500 2.500 0 0 0 4.500 21.500H17A2.500 2.500 0 0 0 19.500 19V17" />
          <path d="M15.500 2L23.500 9 15.500 16V12C11 12 8.500 13 6.500 16 7 10 10 6.500 15.500 6Z" strokeLinejoin="round" />
        </svg>
        Share
        <svg width="15" height="10" viewBox="6 0 15 10" fill="none" stroke="#fff" strokeWidth="1.5" overflow="visible"><path d="M1 1.500L7.500 8 14 1.500" /></svg>
      </ShareButton>
    </MenuRow>
    <Groups>
      <Group $w={736}>
        <GroupBody $pad="12px 0 0 12px">
          <Gallery>
            {themes.map((t, i) => (
              <Theme key={i}>
                <ThemeName>Aa</ThemeName>
                <Bars>{t.map((c, j) => <Bar key={j} $c={c} $h={heights[j]} />)}</Bars>
              </Theme>
            ))}
            <GalleryMore>
              <svg width="10" height="7" viewBox="0 0 10 7" fill="none" stroke="#333" strokeWidth="2"><path d="M1 1L5 5 9 1" /></svg>
            </GalleryMore>
          </Gallery>
        </GroupBody>
        <GroupLabel>Themes</GroupLabel>
      </Group>
      <Group $w={94}>
        <GroupBody $pad="4px 0 0 0">
          <BigButton $w={92}>
            <BigIcon>
              <svg width="44" height="50" viewBox="0 0 44 50" fill="none" stroke={INK} strokeWidth="1.8">
                <path d="M12 4V12M42 4V12M12 8H42M1 15H8M4.500 15V46M1 46H8" />
                <rect x="12" y="15.500" width="30" height="30.500" fill="#fff" />
                <rect x="16" y="20" width="22" height="5" fill={GRAY} stroke={GRAY_D} strokeWidth="1.300" />
              </svg>
            </BigIcon>
            <Line>Page</Line>
            <Line>view<svg width="9" height="7" viewBox="0 0 9 7" fill="none" stroke="#333" strokeWidth="1.800"><path d="M1 1L4.500 5 8 1" /></svg></Line>
          </BigButton>
        </GroupBody>
        <GroupLabel>Scale to fit</GroupLabel>
      </Group>
      <Group $w={85}>
        <GroupBody $pad="4px 0 0 0">
          <BigButton $w={83}>
            <BigIcon>
              <svg width="26" height="50" viewBox="0 0 26 50" fill="none" stroke={INK} strokeWidth="1.8">
                <rect x="1" y="5" width="24" height="41" fill="#fff" rx="1" />
                <path d="M9 41H17" />
              </svg>
            </BigIcon>
            <Line>Mobile</Line>
            <Line>layout</Line>
          </BigButton>
        </GroupBody>
        <GroupLabel>Mobile</GroupLabel>
      </Group>
      <Group $w={182}>
        <GroupBody $pad="9px 0 0 26px">
          <Checks>
            {["Gridlines", "Snap to grid", "Lock objects"].map((t) => (
              <Check key={t}><Box />{t}</Check>
            ))}
          </Checks>
        </GroupBody>
        <GroupLabel>Page options</GroupLabel>
      </Group>
      <Group $w={420}>
        <GroupBody $pad="4px 0 0 12px">
          <BigButton $w={61} $on>
            <BigIcon $pr={3}>
              <svg width="42" height="50" viewBox="0 0 42 50" fill="#fff" stroke={INK} strokeWidth="1.800"><path d="M1 5H41V10L26 27V46H17V27L1 10Z" /></svg>
            </BigIcon>
            <Line>Filters</Line>
          </BigButton>
          <BigButton $w={93} $on $ml={-1}>
            <BigIcon $pr={1}>
              <svg width="26" height="50" viewBox="0 0 26 50" fill="#fff" stroke={INK} strokeWidth="1.800"><path d="M1 5H25V46L13 36.500 1 46Z" /></svg>
            </BigIcon>
            <Line>Bookmarks</Line>
          </BigButton>
          <BigButton $w={77}>
            <BigIcon $pl={3}>
              <svg width="46" height="50" viewBox="0 0 46 50" fill="#fff" stroke={INK} strokeWidth="1.800">
                <rect x="16" y="5" width="26" height="36" fill="#f8d78f" stroke="#d08a2c" />
                <rect x="1.500" y="24" width="25" height="22" />
                <path d="M27 21V45L32 40.500 36 49 40 47 36.500 38.500H43.500Z" />
              </svg>
            </BigIcon>
            <Line>Selection</Line>
          </BigButton>
          <BigButton $w={100} $ml={3}>
            <BigIcon $pl={5}>
              <svg width="42" height="50" viewBox="0 0 42 50" fill="#fff" stroke={INK} strokeWidth="1.800">
                <rect x="2" y="5" width="32" height="41" />
                <path d="M10 20h7v18h-7zM17 12h8v26h-8z" fill="#eee" stroke={GRAY_D} strokeWidth="1.400" />
                <circle cx="31" cy="38" r="10.500" stroke="#2a88c4" strokeWidth="2" />
                <path d="M31 32V39H36M28 25H34M31 25V28M39 28L41 30" stroke="#2a88c4" strokeWidth="2" fill="none" />
              </svg>
            </BigIcon>
            <Line>Performance</Line>
            <Line>analyzer</Line>
          </BigButton>
          <BigButton $w={64}>
            <BigIcon>
              <svg width="48" height="50" viewBox="0 0 48 50" fill="#fff" stroke={INK} strokeWidth="1.800">
                <path d="M24 5H44V46H4V24" />
                <path d="M24 5.500H44V11H24Z" fill={GRAY} stroke={INK} />
                <path d="M22 17H39V23H22M10 31H26V38H10Z" stroke={GRAY_D} fill="none" />
                <path d="M26 27H48V34L44 38V50H32V38L26 34Z" fill="#fafafa" stroke="none" />
                <path d="M27 28H47V31L40.500 38V49H35V38L27 31Z" />
                <circle cx="11" cy="13" r="11" fill="#fafafa" stroke="none" />
                <path d="M2 12A9.500 9.500 0 0 1 20 8M20 2V9H14M21 14A9.500 9.500 0 0 1 3 18M2 24V17H9" stroke="#3c8f55" strokeWidth="2.200" fill="none" />
              </svg>
            </BigIcon>
            <Line>Sync</Line>
            <Line>slicers</Line>
          </BigButton>
        </GroupBody>
        <GroupLabel>Show panes</GroupLabel>
      </Group>
      <Collapse>
        <svg width="14" height="9" viewBox="0 0 14 9" fill="none" stroke="#222" strokeWidth="2"><path d="M1 8L7 2 13 8" /></svg>
      </Collapse>
    </Groups>
  </Ribbon>
);

const LeftRail = () => (
  <Rail>
    <RailItem $on $h={60}>
      <svg width="22" height="22" viewBox="0 0 22 22" fill="none" stroke="#1b1b1b" strokeWidth="1.600"><path d="M1.500 0V20.500H22" /><path d="M4.500 5h3v12h-3zM10.500 9h3v8h-3zM16.500 2h3v15h-3z" /></svg>
    </RailItem>
    <RailItem $h={58}>
      <svg width="24" height="24" viewBox="0 0 24 24" fill="none" stroke="#777" strokeWidth="1.400"><path d="M.8 1H23.200V23H.8ZM.8 5H23.200M.8 11H23.200M.8 17H23.200M8.500 5V23M16 5V23" /></svg>
    </RailItem>
    <RailItem $h={60}>
      <svg width="28" height="28" viewBox="0 0 28 28" fill="none" stroke="#777" strokeWidth="1.500"><path d="M1 9h11v10H1zM1 12.500h11M17 1h10v11H17zM17 5h10M17 16h10v11H17zM17 20h10M17 5H8V9M8 19V24H17" /></svg>
    </RailItem>
    <RailItem $h={62}>
      <svg width="28" height="28" viewBox="0 0 28 28" fill="none" stroke="#777" strokeWidth="1.500">
        <path d="M7 16V4Q7 2 9 2H16L22 8.500V20Q22 22 20 24M16 2V8.500H22M25.500 10V18Q25 23 21 25" />
        <text x="0" y="25" fontFamily="Open Sans" fontWeight="600" fontSize="9.800" fill="#777" stroke="none">DAX</text>
      </svg>
    </RailItem>
  </Rail>
);

const Cal = () => (
  <svg width="8" height="8" viewBox="0 0 8 8" fill="none" stroke="#14401f" strokeWidth=".8"><path d="M.5 1h7v6h-7zM.5 2.500h7M4 5h2" /></svg>
);

const ReportCanvas = () => (
  <Canvas>
    <Pill $x={61} $y={183} $w={188} $h={419}>
      <PillItem $on>SUMMERY</PillItem>
      <PillItem>GRAPH AND CHART</PillItem>
      <PillItem>TABLE</PillItem>
    </Pill>
    <Slicer $x={280} $y={201} $w={164} $h={61}>
      <SlicerTitle>Order Date</SlicerTitle>
      <DateRow>
        <DateBox>2/2/2010<Cal /></DateBox>
        <DateBox>5/22/2017<Cal /></DateBox>
      </DateRow>
      <Track><Knob /><Rule /><Knob /></Track>
    </Slicer>
    <Visual $x={278} $y={283} $w={165} $h={151} $bg="#fff">
      <KpiHead $dark>Sum of Total Profit and Sum of Total<br />Cost by Start of Month</KpiHead>
      <KpiBody $h={125}>
        <svg width="166" height="125" viewBox="834 387 498 375"><polygon points={profitArea} fill="#f9e0d6" /></svg>
        <KpiText $pad={38}>
          <KpiValue $c="#dd6b39"><Narrow $s={0.89}>1.24M</Narrow><KpiMark>!</KpiMark></KpiValue>
          <KpiGoal>Goal: 1.85M (-32.99%)</KpiGoal>
          <KpiDate>Monday, May 01, 2017</KpiDate>
        </KpiText>
      </KpiBody>
    </Visual>
    <Visual $x={278} $y={450} $w={165} $h={143} $bg="#fff">
      <KpiHead>Sum of Total Revenue and Sum of<br />Total Cost by Start of Month</KpiHead>
      <KpiBody $h={117}>
        <svg width="166" height="117" viewBox="834 888 498 351"><polygon points={revenueArea} fill="#d0d3ec" /></svg>
        <KpiText $pad={38}>
          <KpiValue $c="#12239e"><Narrow $s={0.89}>3.10M</Narrow><KpiMark><svg width="7" height="6" viewBox="0 0 7 6" fill="none" stroke="#333" strokeWidth=".9"><path d="M.5 3L2.500 5 6.500.500" /></svg></KpiMark></KpiValue>
          <KpiGoal>Goal: 1.85M (+67.01%)</KpiGoal>
        </KpiText>
      </KpiBody>
    </Visual>
    {cards.map((c) => (
      <Visual key={c.t} $x={487} $y={c.y} $w={174} $h={c.h} $bg="#1aab40">
        <CardHead $h={15}>{c.t}</CardHead>
        <CardValue $h={c.h - 15} $pad={c.p}><Narrow $s={0.89}>{c.v}</Narrow></CardValue>
      </Visual>
    ))}
    <PageEdge $x={63} $y={602} $w={743} $h={3} />
  </Canvas>
);

const FiltersPane = () => (
  <Pane $w={301} $bg="#fff">
    <PaneHead $l={17} $r={14}>
      <Funnel />
      <FilterTitle>Filters</FilterTitle>
      <svg width="20" height="12" viewBox="0 0 20 12" fill="none" stroke="#111" strokeWidth="1.600"><path d="M1 8A9.300 9.300 0 0 1 19 8" /><circle cx="10" cy="8" r="2.800" strokeWidth="1.800" /></svg>
      <HeadGap />
      <DoubleChevron />
    </PaneHead>
    <SearchBox>
      <svg width="24" height="24" viewBox="0 0 24 24" fill="none" stroke="#252423" strokeWidth="1.500"><circle cx="15" cy="8.500" r="7.500" /><path d="M9.500 14L1 22.500" /></svg>
      Search
    </SearchBox>
    <FilterBody>
      {["Filters on this page", "Filters on all pages"].map((t) => (
        <React.Fragment key={t}>
          <FilterHead>{t}<svg width="17" height="34" viewBox="0 0 17 34" fill="#252423"><path d="M0 17h2v2H0zM7.500 17h2v2h-2zM15 17h2v2h-2z" /></svg></FilterHead>
          <DropZone>Add data fields here</DropZone>
        </React.Fragment>
      ))}
    </FilterBody>
  </Pane>
);

const PageTabs = () => (
  <Tabs>
    <Views>
      <View $w={75} $pt={11}>
        <svg width="36" height="21" viewBox="0 0 36 21" fill="none" stroke="#555" strokeWidth="1.600"><path d="M4 1H31V16.500H4ZM17.500 16.500V20M13 20H22" /></svg>
        <Underline />
      </View>
      <View $w={51} $pt={7}>
        <svg width="19" height="30" viewBox="0 0 19 30" fill="none" stroke="#555" strokeWidth="1.600"><rect x="1" y="1" width="17" height="28" rx="1.500" /><path d="M8 25.500H11" /></svg>
      </View>
      <View $w={33} $pt={20}><svg width="7" height="13" viewBox="0 0 7 13"><path d="M7 0V13L0 6.500Z" fill="#bbb" /></svg></View>
      <View $w={10} $pt={20}><svg width="7" height="13" viewBox="0 0 7 13"><path d="M0 0V13L7 6.500Z" fill="#bbb" /></svg></View>
    </Views>
    <Tab $w={139} $on>Summery<TabClose>x</TabClose></Tab>
    <Tab $w={190}>Graph and chart</Tab>
    <Tab $w={103}>Table</Tab>
    <AddTab><svg width="17" height="17" viewBox="0 0 17 17" stroke="#fff" strokeWidth="4"><path d="M8.500 0V17M0 8.500H17" /></svg></AddTab>
  </Tabs>
);

const BookmarksPane = () => (
  <Pane $w={271}>
    <PaneHead $l={12} $r={12}><PaneTitle>Bookmarks</PaneTitle><DoubleChevron /></PaneHead>
    <BmTools>
      <BmTool $w={85}>
        <svg width="19" height="25" viewBox="0 0 19 25" fill="none" stroke="#333" strokeWidth="1.500"><path d="M15 15V1H1V23L9 19M15 16V24M11 20H19" /></svg>
        Add
      </BmTool>
      <BmTool $w={80}>
        <svg width="22" height="25" viewBox="0 0 22 25" fill="none" stroke="#333" strokeWidth="1.500"><path d="M15 9V1H1V23L8 19" /><circle cx="17" cy="14.500" r="4" /><path d="M14 17.500L8.500 24" /></svg>
        View
      </BmTool>
    </BmTools>
    <BmList>
      <BmItem>Graph and chart</BmItem>
      <BmItem>Table</BmItem>
      <BmItem>Summery</BmItem>
    </BmList>
    <BmFoot>Learn how to create and edit<br />bookmarks</BmFoot>
  </Pane>
);

const VizPane = () => (
  <Pane $w={271}>
    <PaneHead $l={12} $r={12}><PaneTitle>Visualizations</PaneTitle><DoubleChevron /></PaneHead>
    <SubTitle>Build visual</SubTitle>
    <Modes>
      <Mode $on>
        <svg width="36" height="37" viewBox="0 0 36 37" fill={GREEN}>
          <path d="M0 1H29" stroke="#222" strokeWidth="1.600" />
          <g stroke="#fff" strokeWidth="1.600"><path d="M1 8.500H35V19H1ZM1 25H35V35.500H1Z" /></g>
          <g stroke="#111" strokeWidth="1.600" strokeDasharray="3 2"><path d="M1 8.500H35V19H1ZM1 25H35V35.500H1Z" /></g>
        </svg>
      </Mode>
      <Mode>
        <svg width="36" height="37" viewBox="0 0 36 37" fill="none" stroke="#222" strokeWidth="1.700">
          <path d="M6 36H1V1H16L27 11.500V15M16 1V11.500H27" />
          <path d="M20 26.500L33 14Q36 13 35 16.500L24 30M20 26.500Q24 27 24 30 23 36 9 35.500 13 34 14 30.500 16 26.500 20 26.500Z" />
        </svg>
      </Mode>
    </Modes>
    <svg width="270" height="14" viewBox="0 0 270 14" fill="none" stroke="#8a8886" strokeWidth="1.300"><path d="M0 12.500H24L36 1.500 48 12.500H270" /></svg>
    <IconGrid>{vizIcons.map((ic, i) => <React.Fragment key={i}>{ic}</React.Fragment>)}</IconGrid>
    <VizScroll>
      <Wells>
        <WellLabel $h={45} $pt={4}>Values</WellLabel>
        <Well>Add data fields here</Well>
        <WellLabel $h={48} $pt={6} $bold>Drill through</WellLabel>
        <WellLabel $h={32}>Cross-report<Toggle $off><Dot $c="#605e5c" />Off</Toggle></WellLabel>
        <WellLabel $h={48}>Keep all filters<Toggle>On<Dot $c="#f3f2f1" /></Toggle></WellLabel>
        <CutWell><WellInner /></CutWell>
      </Wells>
      <VizThumb />
    </VizScroll>
  </Pane>
);

const DataPane = () => (
  <Pane $w={271}>
    <PaneHead $l={12} $r={12}><PaneTitle>Data</PaneTitle><DoubleChevron /></PaneHead>
    <DataSearch>
      <svg width="22" height="22" viewBox="0 0 22 22" fill="none" stroke="#616161" strokeWidth="1.500"><circle cx="9" cy="9" r="8" /><path d="M14.500 14.500L21 21" /></svg>
      Search
    </DataSearch>
    <DataBody>
      <Fields>
        {fields.map((f) => (
          <Field key={f.n} $indent={f.lvl === 2 ? 87 : f.lvl === 1 ? 69 : 42}>
            <Slot $w={f.lvl === 1 ? 20 : 24} $pl={f.c === "r" && !f.lvl ? 4 : 0}>
              {f.c && <Chevron down={f.c === "d"} />}
            </Slot>
            <FieldBox />
            <Slot $w={27}>
              {f.i === "s" && <Sigma />}
              {f.i === "c" && <Calendar />}
              {f.i === "t" && <Tree />}
            </Slot>
            <FieldName>{f.n}</FieldName>
          </Field>
        ))}
      </Fields>
      <DataThumb />
    </DataBody>
  </Pane>
);

const StatusBar = () => (
  <Status>
    Page 1 of 3
    <Zoom>
      <svg width="186" height="20" viewBox="0 0 186 20" stroke="#605e5c" strokeWidth="2">
        <path d="M2 10.500H8.500M174 10H186M180 4V16" />
        <path d="M16 10H166" strokeWidth="1.200" />
        <path d="M91 6.500V13.500" />
        <path d="M40 1V18" strokeWidth="6" />
      </svg>
      <Percent>39%</Percent>
      <svg width="24" height="18" viewBox="0 0 24 18" fill="none" stroke="#605e5c" strokeWidth="1.600"><path d="M1 1H23V17H1Z" /><path d="M4 7V4H7M17 4H20V7M20 11V14H17M7 14H4V11" /></svg>
    </Zoom>
  </Status>
);

const Party = () => (
  <svg width="114" height="59" viewBox="0 0 114 59">
    <defs>
      <linearGradient id="pb" x1="0" y1="0" x2="0" y2="1"><stop offset="0" stopColor="#2f86f0" /><stop offset="1" stopColor="#1547c0" /></linearGradient>
      <linearGradient id="pp" x1="0" y1="0" x2="1" y2="1"><stop offset="0" stopColor="#9a62e0" /><stop offset="1" stopColor="#2b63dd" /></linearGradient>
      <linearGradient id="pl" x1="0" y1="0" x2="0" y2="1"><stop offset="0" stopColor="#fff7c8" stopOpacity=".95" /><stop offset="1" stopColor="#d9cf86" stopOpacity=".6" /></linearGradient>
    </defs>
    <ellipse cx="25" cy="18" rx="17" ry="16" fill="url(#pp)" />
    <ellipse cx="47" cy="11" rx="9" ry="9" fill="#6a63e0" />
    <ellipse cx="71" cy="13" rx="18" ry="13" fill="url(#pb)" />
    <ellipse cx="98" cy="22" rx="13" ry="15" fill="#1d8af0" />
    <ellipse cx="13" cy="33" rx="11" ry="15" fill="#2266e8" />
    <ellipse cx="103" cy="36" rx="9" ry="13" fill="#8b5fd8" />
    <ellipse cx="57" cy="52" rx="56" ry="7" fill="#5c7a36" />
    <path d="M26 12H86V46H26Z" fill="#122c80" />
    <path d="M26 46V11H86V46H79V18H33V46Z" fill="#2448a8" stroke="#b9d2fb" strokeWidth="1" />
    <path d="M27 12L33 18 39 12 45 18 51 12 57 18 63 12 69 18 75 12 81 18 86 12M27 18L33 25 27 32 33 39 27 45M33 18L27 25 33 32 27 39M86 18L79 25 86 32 79 39 86 45M79 18L86 25 79 32 86 39" stroke="#cfdefc" strokeWidth="1" fill="none" />
    <path d="M39 24L38 42H50ZM73 24L62 42H76ZM50 20L46 44H56ZM62 20L58 44H68Z" fill="url(#pl)" />
    <g fill="#f6d660"><circle cx="27" cy="13" r="2.500" /><circle cx="41" cy="12" r="2.500" /><circle cx="55" cy="12" r="2.500" /><circle cx="69" cy="12" r="2.500" /><circle cx="84" cy="13" r="2.500" /></g>
    <path d="M50 34L62 27 67 36 57 44Z" fill="#c9cfae" />
    <text x="54" y="41" fontFamily="Open Sans" fontWeight="700" fontSize="12" fill="#173326">1</text>
    <g>
      <ellipse cx="12" cy="46" rx="5.500" ry="6" fill="#ff7d6e" /><ellipse cx="22" cy="47" rx="4.500" ry="5.500" fill="#52c4f0" />
      <ellipse cx="32" cy="51" rx="5.500" ry="6" fill="#ffa25e" /><ellipse cx="28" cy="45" rx="4" ry="5" fill="#f779c8" />
      <ellipse cx="43" cy="48" rx="6" ry="7" fill="#ff7b8d" /><ellipse cx="51" cy="52" rx="7" ry="7" fill="#6fe3ad" />
      <ellipse cx="61" cy="46" rx="5" ry="5" fill="#fba35f" /><ellipse cx="68" cy="51" rx="5.500" ry="6" fill="#5fb6f0" />
      <ellipse cx="79" cy="49" rx="8" ry="8" fill="#e77df2" /><ellipse cx="90" cy="48" rx="5" ry="6" fill="#79e0a0" />
      <ellipse cx="98" cy="46" rx="5" ry="6" fill="#f58be0" /><ellipse cx="105" cy="47" rx="4" ry="5" fill="#ff8a66" />
    </g>
  </svg>
);

const TaskBar = () => (
  <Taskbar>
    <Start>
      <svg width="24" height="24" viewBox="0 0 24 24" fill="#fff"><path d="M0 3.500L10 2V11.500H0ZM11 1.800L24 0V11.500H11ZM0 12.500H10V22L0 20.500ZM11 12.500H24V24L11 22.200Z" /></svg>
    </Start>
    <TaskSearch>
      <svg width="25" height="25" viewBox="0 0 25 25" fill="none" stroke="#111" strokeWidth="1.700"><circle cx="16" cy="8.500" r="7.500" /><path d="M10.500 14L1.500 24" /></svg>
      <TaskText>Type here to search</TaskText>
      <Party />
    </TaskSearch>
    <TaskItem $w={61} $ml={11} $run>
      <svg width="32" height="28" viewBox="0 0 32 28"><path d="M0 2Q0 0 2 0H11L14 3H30Q32 3 32 5V24Q32 26 30 26H2Q0 26 0 24Z" fill="#f7c64b" /><path d="M0 2Q0 0 2 0H11L14 3 12 5H0Z" fill="#d99a20" /><path d="M6 28V16Q6 14 8 14H24Q26 14 26 16V28H21V21H11V28Z" fill="#3a8fdc" /></svg>
    </TaskItem>
    <TaskItem $w={61} $ml={13.500}>
      <svg width="36" height="36" viewBox="0 0 36 36">
        <defs><linearGradient id="ff" x1=".8" y1="0" x2=".2" y2="1"><stop offset="0" stopColor="#ffe14a" /><stop offset=".45" stopColor="#ff8a1e" /><stop offset="1" stopColor="#f0205c" /></linearGradient></defs>
        <path d="M24 1C31 6 35 13 35 20 35 29 27.500 36 18 36S1 29 1 20C1 15 2.500 11 6 7L7.500 11C10 9.500 14 9 17 11 18 6 20 3 24 1Z" fill="url(#ff)" />
        <circle cx="18.500" cy="19.500" r="7.500" fill="#7a3fd0" />
        <path d="M8 13C13 10 18 13 20 16 15 15 15 19 12 20Z" fill="#ff9a26" />
      </svg>
    </TaskItem>
    <TaskItem $w={61} $ml={13.500}>
      <svg width="36" height="36" viewBox="0 0 36 36"><path d="M10 8V2.500Q10 1 11.500 1H24.500Q26 1 26 2.500V8" fill="none" stroke="#2aa3e0" strokeWidth="2" /><path d="M1 6H35V31Q35 35 31 35H5Q1 35 1 31Z" fill="#f1f3f5" /><path d="M10.500 12.500h7v7h-7z" fill="#f25022" /><path d="M18.500 12.500h7v7h-7z" fill="#7fba00" /><path d="M10.500 20.500h7v7h-7z" fill="#00a4ef" /><path d="M18.500 20.500h7v7h-7z" fill="#ffb900" /></svg>
    </TaskItem>
    <TaskItem $w={61} $ml={13.500}>
      <svg width="37" height="37" viewBox="0 0 37 37">
        <defs><linearGradient id="eg" x1="0" y1="0" x2="1" y2=".4"><stop offset="0" stopColor="#1b9de2" /><stop offset=".6" stopColor="#35c8d0" /><stop offset="1" stopColor="#62e05a" /></linearGradient></defs>
        <circle cx="18.500" cy="18.500" r="18" fill="#1473cf" />
        <path d="M.8 16C2 6 10 .5 18.500.5 29 .5 36.500 8 36.500 16 36.500 22 32 25 27 25 23 25 21 23 22 21.500 25 17 22 12 15 12 8 12 2 15 .8 20Z" fill="url(#eg)" />
        <path d="M13 16C9 25 16 34 27 33 31 32 34 28 34.500 27 27 31 17 28 17 20 17 17 19 15.500 20 15 17 14 14 14.500 13 16Z" fill="#0d4f9e" />
      </svg>
    </TaskItem>
    <TaskItem $w={61} $ml={15} $run $pl={3}>
      <svg width="40" height="38" viewBox="0 0 40 38">
        <g fill="#35b3b5">{[0, 45, 90, 135, 180, 225, 270, 315].map((a) => <path key={a} d="M14.500 0H21.500L20.500 11H15.500Z" transform={`rotate(${a + 8} 18 18)`} />)}</g>
        <circle cx="28" cy="27" r="11" fill="#f40d0d" />
        <text x="28" y="33" textAnchor="middle" fontFamily="Open Sans" fontWeight="700" fontSize="17" fill="#fff">7</text>
      </svg>
    </TaskItem>
    <TaskItem $w={73} $ml={8} $run $on>
      <svg width="28" height="36" viewBox="0 0 28 36">
        <defs><linearGradient id="p1" x1="0" y1="0" x2="1" y2="1"><stop offset="0" stopColor="#e8b010" /><stop offset="1" stopColor="#c57f0c" /></linearGradient><linearGradient id="p2" x1="0" y1="0" x2="1" y2="1"><stop offset="0" stopColor="#f8dc60" /><stop offset="1" stopColor="#e3a91a" /></linearGradient></defs>
        <rect x="15" width="13" height="36" rx="1" fill="url(#p1)" /><rect x="8" y="9" width="13" height="27" rx="1" fill="url(#p2)" /><rect y="18" width="13" height="18" rx="1" fill="#f9e07c" />
      </svg>
    </TaskItem>
    <TaskItem $w={61} $ml={8} $run $pl={3}>
      <svg width="40" height="40" viewBox="0 0 40 40">
        <circle cx="18" cy="19" r="18" fill="#2f9a4c" />
        <path d="M2.400 10A18 18 0 0 1 33.600 10H18L10 23Z" fill="#dd4436" />
        <path d="M18 10H33.600A18 18 0 0 1 18 37L26 23Z" fill="#f8c832" />
        <circle cx="18" cy="19" r="8.500" fill="#fff" /><circle cx="18" cy="19" r="6.800" fill="#3f7fe8" />
        <circle cx="27.500" cy="27.500" r="11.500" fill="#a9c8f2" /><circle cx="27.500" cy="27.500" r="9" fill="#dce9fb" stroke="#2b66b8" strokeWidth="1.500" />
        <circle cx="27.500" cy="25" r="3" fill="none" stroke="#2b66b8" strokeWidth="2" /><path d="M21.500 32Q27.500 27 33.500 32" fill="none" stroke="#2b66b8" strokeWidth="2" />
      </svg>
    </TaskItem>
    <Tray>
      <svg width="18" height="10" viewBox="0 0 18 10" fill="none" stroke="#fff" strokeWidth="1.500"><path d="M.5 9.500L9 1 17.500 9.500" /></svg>
      <Wifi>
        <svg width="19" height="20" viewBox="0 0 19 20" fill="none" stroke="#ddd" strokeWidth="1.200"><path d="M1 19C1 9 8 1.500 18 1.500M5.500 19C5.500 12 11 6 18 6M10 19C10 14 13 10.500 18 10.500" /><circle cx="16.500" cy="17" r="1.800" fill="#fff" /></svg>
      </Wifi>
      <svg width="23" height="13" viewBox="0 0 23 13" fill="none" stroke="#fff" strokeWidth="1.300"><path d="M.7.700H21V12.300H.7Z" /><path d="M2.500 2.500H16V10.500H2.500Z" fill="#fff" stroke="none" /><path d="M22.200 4V9" /></svg>
      <Clock>9:52 PM<br />6/26/2025</Clock>
      <svg width="25" height="24" viewBox="0 0 25 24" fill="none" stroke="#fff" strokeWidth="1.300"><path d="M.7.700H24.300V18.500H16L12 23 8 18.500H.7Z" /></svg>
      <Peek />
    </Tray>
  </Taskbar>
);

export default function App() {
  return (
    <Window>
      <Global />
      <RibbonBar />
      <Main>
        <LeftRail />
        <Work>
          <WorkTop>
            <ReportCanvas />
            <FiltersPane />
          </WorkTop>
          <PageTabs />
        </Work>
        <BookmarksPane />
        <VizPane />
        <DataPane />
      </Main>
      <StatusBar />
      <TaskBar />
    </Window>
  );
}
